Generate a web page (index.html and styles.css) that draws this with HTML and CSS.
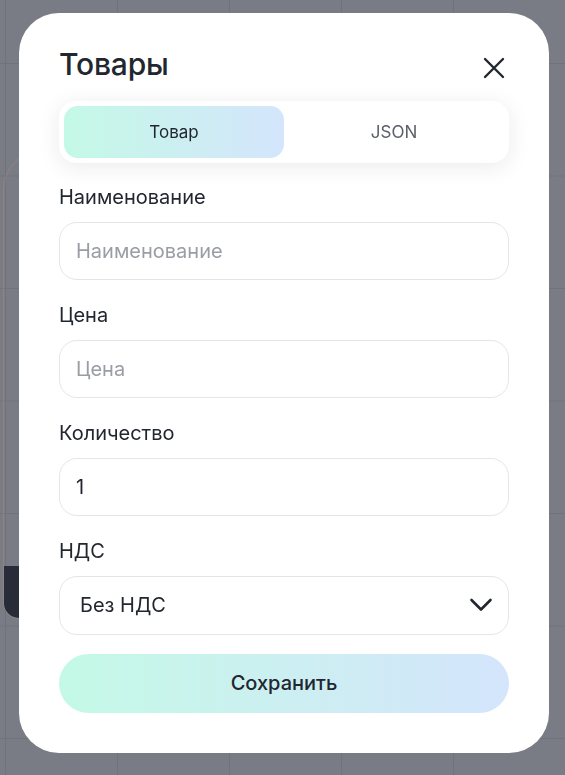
FILE: index.html
```html
<!DOCTYPE html>
<html lang="ru">
<head>
<meta charset="utf-8">
<title>Товары</title>
<link rel="stylesheet" href="styles.css">
</head>
<body>
<div class="page">
  <div class="bg-card">
    <div class="bg-card-foot"></div>
  </div>
</div>
<div class="overlay">
  <div class="modal">
    <div class="modal-head">
      <h1 class="title">Товары</h1>
      <button class="close" aria-label="Закрыть">
        <svg width="22" height="22" viewBox="0 0 22 22"><path d="M2 2 L20 20 M20 2 L2 20" stroke="#22262f" stroke-width="2.4" stroke-linecap="round" fill="none"/></svg>
      </button>
    </div>
    <div class="tabs">
      <div class="tab active">Товар</div>
      <div class="tab">JSON</div>
    </div>
    <div class="form">
      <div class="field">
        <div class="label">Наименование</div>
        <div class="input placeholder">Наименование</div>
      </div>
      <div class="field">
        <div class="label">Цена</div>
        <div class="input placeholder">Цена</div>
      </div>
      <div class="field">
        <div class="label">Количество</div>
        <div class="input value">1</div>
      </div>
      <div class="field">
        <div class="label">НДС</div>
        <div class="input select">
          <span>Без НДС</span>
          <svg width="24" height="14" viewBox="0 0 24 14"><path d="M2.5 2 L12 11.5 L21.5 2" stroke="#22262f" stroke-width="2.6" stroke-linecap="round" stroke-linejoin="round" fill="none"/></svg>
        </div>
      </div>
    </div>
    <button class="save">Сохранить</button>
  </div>
</div>
</body>
</html>
```
FILE: styles.css
```css
* { box-sizing: border-box; }
html, body { margin: 0; padding: 0; }
body {
  width: 565px;
  height: 775px;
  overflow: hidden;
  font-family: Inter, "Noto Sans", sans-serif;
  background-color: #7a7c85;
  background-image:
    linear-gradient(to right, #71737c 1px, transparent 1px),
    linear-gradient(to bottom, #71737c 1px, transparent 1px);
  background-size: 112px 112.5px;
  background-position: 5px 63px;
}
.page {
  padding-top: 150px;
  padding-left: 3px;
}
.bg-card {
  width: 320px;
  height: 469px;
  border: 1px solid rgba(176, 140, 120, 0.45);
  border-radius: 40px 40px 16px 16px;
  display: flex;
  flex-direction: column;
  justify-content: flex-end;
  overflow: hidden;
}
.bg-card-foot {
  height: 52px;
  background: #272c38;
}
.overlay {
  position: fixed;
  inset: 0;
  padding: 13px 0 0 19px;
}
.modal {
  width: 530px;
  height: 740px;
  background: #fff;
  border-radius: 40px;
  padding: 33px 40px 40px;
  display: flex;
  flex-direction: column;
}
.modal-head {
  display: flex;
  align-items: center;
  justify-content: space-between;
  height: 36px;
}
.title {
  margin: 0;
  font-size: 30px;
  line-height: 36px;
  font-weight: 500;
  color: #22262f;
  letter-spacing: -0.2px;
}
.close {
  border: 0;
  background: none;
  padding: 0;
  width: 22px;
  height: 22px;
  margin-right: 4px;
  margin-top: 8px;
  display: flex;
}
.tabs {
  margin-top: 19px;
  height: 62px;
  padding: 5px;
  border-radius: 17px;
  background: #fff;
  box-shadow: 0 4px 22px rgba(30, 35, 60, 0.09);
  display: flex;
}
.tab {
  flex: 1;
  display: flex;
  align-items: center;
  justify-content: center;
  font-size: 17px;
  color: #5b606b;
  border-radius: 14px;
}
.tab.active {
  background: linear-gradient(90deg, #c4f9e6 0%, #d4e5fc 100%);
  color: #22262f;
}
.form {
  margin-top: 22px;
  display: flex;
  flex-direction: column;
  gap: 23px;
}
.field {
  display: flex;
  flex-direction: column;
  gap: 13px;
}
.label {
  font-size: 20px;
  line-height: 24px;
  color: #22262f;
}
.input {
  height: 58px;
  border: 1px solid #e3e4ec;
  border-radius: 18px;
  padding: 0 16px;
  display: flex;
  align-items: center;
  font-size: 20px;
}
.placeholder { color: #9a9da5; }
.value { color: #22262f; }
.select {
  height: 59px;
  justify-content: space-between;
  padding: 0 15px 0 20px;
  color: #22262f;
}
.save {
  margin-top: 19px;
  height: 60px;
  border: 0;
  border-radius: 30px;
  background: linear-gradient(90deg, #c4f9e6 0%, #d4e5fc 100%);
  font-family: Inter, "Noto Sans", sans-serif;
  font-size: 20px;
  font-weight: 500;
  color: #22262f;
}
```
